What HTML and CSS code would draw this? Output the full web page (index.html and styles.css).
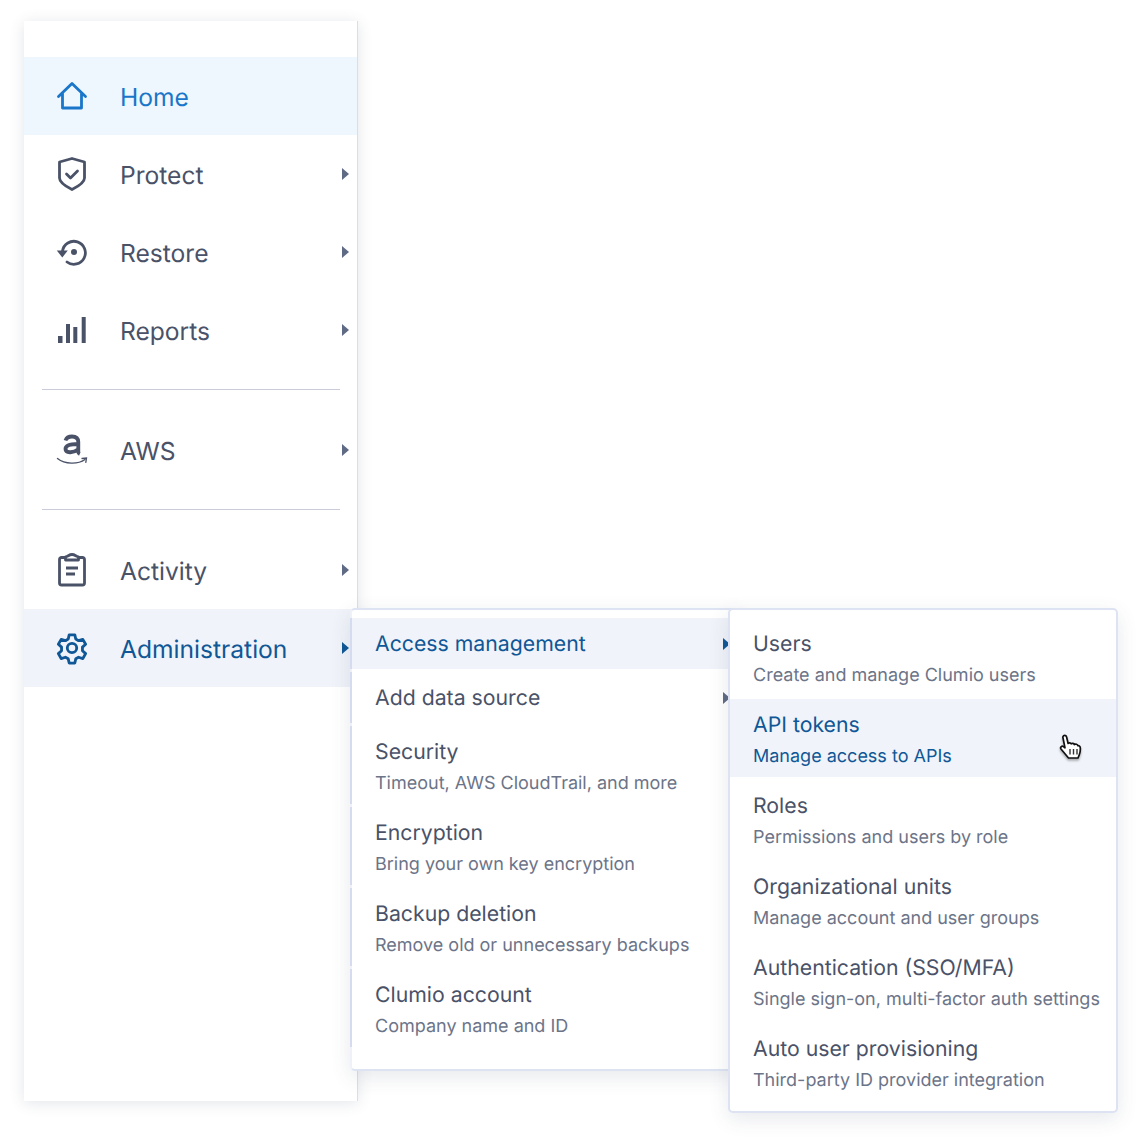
FILE: index.html
```html
<!DOCTYPE html>
<html lang="en">

<head>
  <meta charset="UTF-8">
  <title>Clumio navigation</title>
  <link rel="stylesheet" href="styles.css">
</head>

<body>
  <div class="stage">
    <nav class="sidebar">
      <a class="nav-item nav-item-home">
        <svg class="nav-icon" viewBox="0 0 32 32" fill="none" stroke="currentColor" stroke-width="2.800" stroke-linejoin="round" stroke-linecap="round"><path d="M2.500 16.500 16 3.500l13.500 13M6.500 13.500V28h19V13.500"/></svg>
        <span>Home</span>
      </a>
      <a class="nav-item">
        <svg class="nav-icon" viewBox="0 0 32 32" fill="none" stroke="currentColor" stroke-width="2.800" stroke-linejoin="round" stroke-linecap="round"><path d="M16 .5 28.500 4V20C28.500 24.500 22 28.500 16 31.500 10 28.500 3.500 24.500 3.500 20V4Z"/><path d="m10.500 16 4 4 7-7"/></svg>
        <span>Protect</span>
        <i class="arrow"></i>
      </a>
      <a class="nav-item">
        <svg class="nav-icon" viewBox="0 0 32 32" fill="none" stroke="currentColor" stroke-width="2.800" stroke-linecap="round"><path d="M6.500 15A11.500 11.500 0 1 1 11 26"/><path d="M.8 14.500h11l-5.500 7z" fill="currentColor" stroke="none"/><circle cx="18" cy="16" r="3" fill="currentColor" stroke="none"/></svg>
        <span>Restore</span>
        <i class="arrow"></i>
      </a>
      <a class="nav-item">
        <svg class="nav-icon" viewBox="0 0 32 32" fill="currentColor"><rect x="2" y="22" width="4.500" height="7"/><rect x="10" y="10" width="4" height="19"/><rect x="17.300" y="13" width="4" height="16"/><rect x="25.700" y="3" width="4" height="26"/></svg>
        <span>Reports</span>
        <i class="arrow"></i>
      </a>
      <hr class="nav-rule">
      <a class="nav-item">
        <svg class="nav-icon" viewBox="0 0 32 32" fill="none" stroke="currentColor"><path d="M1.500 24.500C9 30.500 22 30.500 29 25.500" stroke-width="1.400" stroke-linecap="round"/><path d="M26 24.500 30.500 24 29.800 28.300" stroke-width="1.300" stroke-linecap="round"/><path d="M9.500 6.500C10.500 3.500 13 2.500 16 2.500c4.500 0 6.300 2 6.300 5.500V18c0 1 .4 1.500 1.500 2M22 10c-7 0-12.500 1-12.500 5 0 4 7.500 4.500 12.500 .5" stroke-width="3.800"/></svg>
        <span>AWS</span>
        <i class="arrow"></i>
      </a>
      <hr class="nav-rule">
      <a class="nav-item">
        <svg class="nav-icon" viewBox="0 0 32 32" fill="none" stroke="currentColor" stroke-width="2.800" stroke-linejoin="round"><path d="M9 3.500H5.500a2 2 0 0 0-2 2V29a2 2 0 0 0 2 2h21a2 2 0 0 0 2-2V5.500a2 2 0 0 0-2-2H23"/><path d="M9.500 6V2.800C12 2.500 13 .5 16 .5s4 2 6.500 2.300V6z"/><path d="M10 14h12M10 20h9" stroke-width="3"/></svg>
        <span>Activity</span>
        <i class="arrow"></i>
      </a>
      <a class="nav-item nav-item-open">
        <svg class="nav-icon" viewBox="-1 -1 34 34" fill="none" stroke="currentColor" stroke-width="3" stroke-linejoin="round"><path d="M13 2h6l1 4.500 3 1.700 4.500-1.400 3 5.200-3.400 3.100v3.800l3.400 3.100-3 5.200-4.500-1.400-3 1.700-1 4.500h-6l-1-4.500-3-1.700-4.500 1.400-3-5.200 3.400-3.100v-3.800L1.500 12l3-5.200L9 8.200l3-1.700z"/><circle cx="16" cy="16" r="5"/></svg>
        <span>Administration</span>
        <i class="arrow"></i>
      </a>
    </nav>

    <div class="menu menu-first">
      <a class="menu-item menu-item-short menu-item-open">
        <b>Access management</b>
        <i class="arrow"></i>
      </a>
      <a class="menu-item menu-item-short">
        <b>Add data source</b>
        <i class="arrow"></i>
      </a>
      <a class="menu-item">
        <b>Security</b>
        <small>Timeout, AWS CloudTrail, and more</small>
      </a>
      <a class="menu-item">
        <b>Encryption</b>
        <small>Bring your own key encryption</small>
      </a>
      <a class="menu-item">
        <b>Backup deletion</b>
        <small>Remove old or unnecessary backups</small>
      </a>
      <a class="menu-item">
        <b>Clumio account</b>
        <small>Company name and ID</small>
      </a>
    </div>

    <div class="menu menu-second">
      <a class="menu-item">
        <b>Users</b>
        <small>Create and manage Clumio users</small>
      </a>
      <a class="menu-item menu-item-open">
        <b>API tokens</b>
        <small>Manage access to APIs</small>
        <svg class="cursor" viewBox="0 0 24 28"><path d="M3.800 3C4.500 .8 7 .8 7.600 3l1.500 6.500c1-1 2.500-.8 3.100.3 1-.8 2.600-.5 3.200.7 1.300-.7 3-.2 3.500 1.200 1.200-.2 2.300.6 2.400 2 .2 2.500-.2 5-1 7l-1.300 3.300H9.500l-7.500-9c-1.200-1.600.7-3.500 2.400-2.400l1.600 1.200z" fill="#fff" stroke="#111" stroke-width="1.700" stroke-linejoin="round"/><path d="M11 15v5.500M14.500 15v5.500M18 15v5.500" stroke="#333" stroke-width="1.400"/></svg>
      </a>
      <a class="menu-item">
        <b>Roles</b>
        <small>Permissions and users by role</small>
      </a>
      <a class="menu-item">
        <b>Organizational units</b>
        <small>Manage account and user groups</small>
      </a>
      <a class="menu-item">
        <b>Authentication (SSO/MFA)</b>
        <small>Single sign-on, multi-factor auth settings</small>
      </a>
      <a class="menu-item">
        <b>Auto user provisioning</b>
        <small>Third-party ID provider integration</small>
      </a>
    </div>
  </div>
</body>

</html>
```

FILE: styles.css
```css
*,
*::before,
*::after {
  box-sizing: border-box;
}
body {
  margin: 0;
  background: #fff;
  color: #4a5268;
  font-family: Inter, "Liberation Sans", sans-serif;
  text-rendering: geometricPrecision;
}
.stage {
  position: relative;
  height: 1140px;
  padding: 21px 0 0 24px;
}
.sidebar {
  width: 334px;
  height: 1080px;
  padding-top: 36px;
  background: #fff;
  border-right: 1px solid #d9deee;
  box-shadow: 0 2px 14px rgba(60, 70, 100, .14);
}
.nav-item {
  display: flex;
  align-items: center;
  height: 78px;
  padding-left: 32px;
  font-size: 24.6px;
}
.nav-item span {
  margin: 1px 0 0 32px;
}
.nav-icon {
  flex: none;
  width: 32px;
  height: 32px;
  overflow: visible;
}
.nav-item .arrow {
  margin-left: auto;
  margin-right: 8px;
}
.nav-item-home {
  background: #eef6fe;
  color: #1976c9;
}
.nav-item-open {
  background: #f0f3f9;
  color: #0f5796;
}
.nav-rule {
  height: 1px;
  margin: 20px 17px 21px 18px;
  border: 0;
  background: #c9cddb;
}
.arrow {
  flex: none;
  width: 0;
  height: 0;
  border-top: 6px solid transparent;
  border-bottom: 6px solid transparent;
  border-left: 7px solid #5f6b85;
}
.nav-item-open .arrow,
.menu-item-open .arrow {
  border-left-color: #0f5796;
}
.menu {
  position: absolute;
  top: 608px;
  display: flex;
  flex-direction: column;
  gap: 3px;
  width: 390px;
  padding-top: 8px;
  background: #fff;
  border: 2px solid #dde3f2;
  border-radius: 5px;
  box-shadow: 0 6px 20px rgba(60, 70, 100, .12);
}
.menu-first {
  left: 350px;
  height: 463px;
  border-left-color: #eef1f8;
}
.menu-first .menu-item {
  padding-right: 8px;
  box-shadow: -2px 0 0 #d5dcef;
}
.menu-second {
  left: 728px;
  height: 505px;
}
.menu-item {
  position: relative;
  display: flex;
  flex-wrap: wrap;
  align-content: flex-start;
  align-items: center;
  justify-content: space-between;
  height: 78px;
  padding: 13px 12px 0 23px;
}
.menu-item-short {
  height: 51px;
}
.menu-item b {
  font-size: 21.25px;
  font-weight: 400;
  line-height: 26px;
}
.menu-item small {
  flex-basis: 100%;
  margin-top: 6px;
  color: #6c7488;
  font-size: 18px;
  line-height: 26px;
}
.menu-item-open {
  background: #f0f3f9;
  color: #0f5796;
}
.menu-item-open small {
  color: #0f5796;
}
.cursor {
  position: absolute;
  top: 35px;
  left: 329px;
  width: 24px;
  height: 28px;
  overflow: visible;
  filter: drop-shadow(0 2px 1px rgba(0, 0, 0, .3));
}
```
